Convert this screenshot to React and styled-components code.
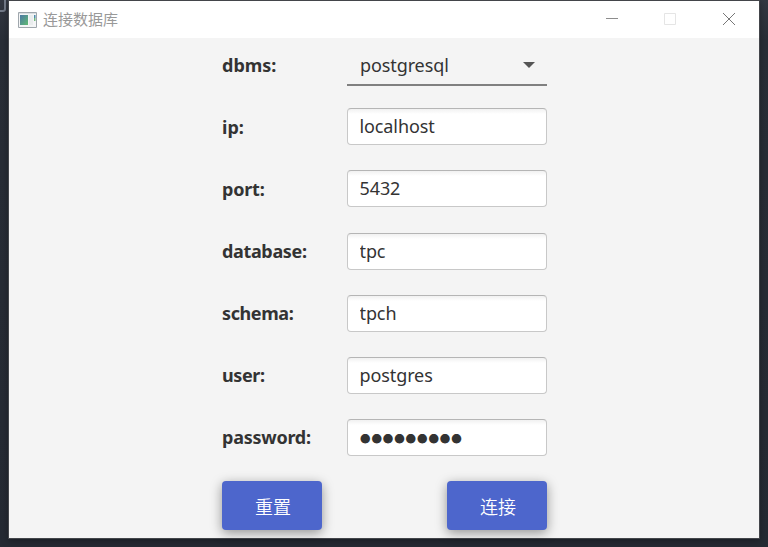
import React from 'react';
import styled, { createGlobalStyle } from 'styled-components';

const GlobalStyle = createGlobalStyle`
  * { box-sizing: border-box; }
  body { margin: 0; overflow: hidden; background: #252a33; }
`;

const latin = '"Noto Sans", "Open Sans", "Noto Sans CJK SC", sans-serif';
const chinese = '"Noto Sans CJK SC", sans-serif';

const Desktop = styled.main`
  position: relative;
  width: 768px;
  height: 547px;
  padding: 0 8px 8px;
  background: linear-gradient(#343842 0, #292e37 40px, #252a33 100%);
`;

const EditorEdge = styled.span`
  position: absolute;
  left: -6px;
  top: -4px;
  width: 12px;
  height: 16px;
  border: 2px solid #747b89;
  border-radius: 3px;
`;

const Window = styled.section`
  display: flex;
  flex-direction: column;
  width: 752px;
  height: 539px;
  border: 1px solid #43454a;
  background: #f4f4f4;
  box-shadow: 0 2px 7px rgba(0, 0, 0, 0.3);
  position: relative;
`;

const TitleBar = styled.header`
  display: flex;
  align-items: center;
  flex: none;
  height: 37px;
  padding: 0 1px 0 9px;
  background: #fff;
`;

const Title = styled.h1`
  flex: 1;
  margin: -2px 0 0 6px;
  color: #999;
  font: 400 15px/22px ${chinese};
`;

const WindowButton = styled.button`
  display: grid;
  place-items: center;
  width: 58.5px;
  height: 37px;
  padding: 0 0 1px;
  border: 0;
  background: transparent;
`;

const Form = styled.form`
  display: grid;
  grid-template-columns: 125px 200px;
  grid-template-rows: 49.8px repeat(6, 62.125px) 61.45px;
  margin: 8px 0 0 213px;
  align-items: center;
`;

const Label = styled.label`
  color: #333;
  font: 700 18px/24px ${latin};
  letter-spacing: ${({ $spacing }) => $spacing || 0}px;
  white-space: nowrap;
  ${({ $first }) => $first && 'align-self: start; padding-top: 7px;'}
`;

const Field = styled.input`
  width: 200px;
  height: 37px;
  padding: 0 11.5px 1px;
  border: 1px solid #c8c8c8;
  border-top-color: #b5b5b5;
  border-radius: 4px;
  outline: 0;
  background: linear-gradient(#f1f1f1 0, #fff 5px);
  color: #333;
  font: 400 18px/24px ${latin};
  letter-spacing: -0.1px;
  ${({ $masked }) => $masked && `
    padding: 3px 12px 0;
    font: 400 10.5px/24px ${chinese};
    letter-spacing: 0.9px;
  `}
`;

const Select = styled.div`
  display: flex;
  align-items: center;
  justify-content: space-between;
  align-self: start;
  height: 40px;
  padding: 0 12px 0 13px;
  border-bottom: 2px solid #808080;
  color: #333;
  font: 400 18px/24px ${latin};
  letter-spacing: -0.1px;
`;

const Actions = styled.div`
  display: flex;
  grid-column: 1 / 3;
  align-self: end;
  justify-content: space-between;
`;

const Action = styled.button`
  width: 100px;
  height: 49px;
  padding: 2px 0 0 2px;
  border: 0;
  border-radius: 4px;
  background: #4d66cc;
  box-shadow: 0 3px 12px rgba(0, 0, 0, 0.4);
  color: #fff;
  font: 350 18px/24px ${chinese};
`;

const fields = [
  { name: 'ip', value: 'localhost' },
  { name: 'port', value: '5432', spacing: -0.2 },
  { name: 'database', value: 'tpc', spacing: -0.35 },
  { name: 'schema', value: 'tpch', spacing: -0.4 },
  { name: 'user', value: 'postgres', spacing: -0.4 },
  { name: 'password', value: '●●●●●●●●●', spacing: -0.25, masked: true },
];

function AppIcon() {
  return (
    <svg width="19" height="16" viewBox="0 0 19 16">
      <defs>
        <linearGradient id="screen" x1="0" y1="0" x2="1" y2="1">
          <stop stopColor="#4c78a5" /><stop offset="1" stopColor="#5fbb72" />
        </linearGradient>
      </defs>
      <path fill="#f4f5f6" stroke="#a0a7ad" d="M.5.5h18v15H.5z" />
      <path stroke="#d8dde0" d="M1 1.5h17" />
      <path fill="url(#screen)" d="M2 3h8v10H2z" />
      <path fill="#e9eced" d="M11 3h4v10h-4z" />
      <path fill="#4c8cab" d="M16 3h1.5v3H16z" />
      <path fill="#70b77c" d="M16 6h1.5v3H16z" />
    </svg>
  );
}

export default function App() {
  return (
    <Desktop>
      <GlobalStyle />
      <EditorEdge />
      <Window>
        <TitleBar>
          <AppIcon />
          <Title>连接数据库</Title>
          <WindowButton aria-label="最小化">
            <svg width="12" height="12"><path d="M0 5.5h12" stroke="#8d8d8d" /></svg>
          </WindowButton>
          <WindowButton aria-label="最大化">
            <svg width="12" height="12"><path d="M.5.5h11v11H.5z" fill="none" stroke="#e5e5e5" /></svg>
          </WindowButton>
          <WindowButton aria-label="关闭">
            <svg width="12" height="12"><path d="m0 0 12 12M12 0 0 12" stroke="#777" /></svg>
          </WindowButton>
        </TitleBar>
        <Form>
          <Label $first>dbms:</Label>
          <Select>
            postgresql
            <svg width="12" height="6"><path d="M0 0h12L6 6z" fill="#555" /></svg>
          </Select>
          {fields.map(({ name, value, spacing, masked }) => (
            <React.Fragment key={name}>
              <Label htmlFor={name} $spacing={spacing}>{name}:</Label>
              <Field id={name} defaultValue={value} $masked={masked} />
            </React.Fragment>
          ))}
          <Actions>
            <Action type="button">重置</Action>
            <Action type="button">连接</Action>
          </Actions>
        </Form>
      </Window>
    </Desktop>
  );
}
